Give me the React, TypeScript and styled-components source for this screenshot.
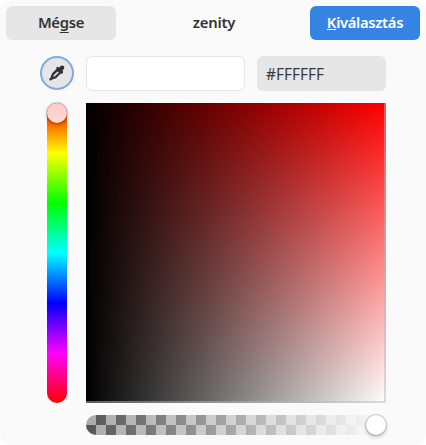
import React from "react";
import styled, { createGlobalStyle } from "styled-components";

const Global = createGlobalStyle`
  body { margin: 0; background: #fff; overflow: hidden; }
  * { box-sizing: border-box; }
`;

const Window = styled.main`
  width: 426px;
  height: 445px;
  border-radius: 14px;
  background: #fafafa;
  color: #2e3436;
  font: 15px "Noto Sans", sans-serif;
  overflow: hidden;
  position: relative;
`;

const CornerOutline = styled.svg`
  position: absolute;
  inset: 0;
  pointer-events: none;
`;

const HeaderBar = styled.header`
  display: grid;
  grid-template-columns: 110px 1fr 110px;
  height: 46px;
  padding: 6px;
  align-items: center;
`;

const Title = styled.h1`
  margin: 0;
  padding-left: 2px;
  font-size: 14.8px;
  letter-spacing: -0.2px;
  line-height: 33px;
  height: 34px;
  font-weight: 600;
  color: #333;
  text-align: center;
`;

const Button = styled.button<{ $primary?: boolean }>`
  height: 34px;
  padding: 0 0 1px;
  border: 0;
  border-radius: 6px;
  font: 600 14.8px/33px "Noto Sans", sans-serif;
  letter-spacing: ${(p) => (p.$primary ? "-0.32px" : "-0.3px")};
  color: ${(p) => (p.$primary ? "#fff" : "#333")};
  background: ${(p) => (p.$primary ? "#3584e4" : "#e6e6e6")};
`;

const Mnemonic = styled.span<{ $drop: number }>`
  text-decoration: underline;
  text-decoration-thickness: 1px;
  text-decoration-skip-ink: none;
  text-underline-offset: ${(p) => p.$drop}px;
`;

const Editor = styled.section`
  display: grid;
  grid-template-columns: 34px 300px;
  grid-template-rows: 35px 300px 20px;
  column-gap: 12px;
  row-gap: 12px;
  padding: 10px 40px 0;
`;

const PickerButton = styled.button`
  width: 34px;
  height: 34px;
  padding: 0;
  border: 2px solid #81aae0;
  border-radius: 50%;
  background: #e6e6e6;
  display: grid;
  place-items: center;
`;

const Fields = styled.div`
  display: grid;
  grid-template-columns: 159px 129px;
  gap: 12px;
`;

const Swatch = styled.div`
  border: 1px solid #e6e6e6;
  border-radius: 6px;
  background: #fff;
`;

const HexInput = styled.input`
  width: 129px;
  height: 35px;
  border: 0;
  border-radius: 6px;
  padding: 1px 9px 0;
  outline: 0;
  background: #e6e6e6;
  color: #3a3a3a;
  font: 15.4px "Noto Sans", sans-serif;
`;

const HueTrack = styled.div`
  width: 20px;
  height: 300px;
  justify-self: center;
  border-radius: 10px;
  position: relative;
  background: linear-gradient(#f00, #ff0 16.67%, #0f0 33.33%, #0ff 50%, #00f 66.67%, #f0f 83.33%, #f00);
`;

const Plane = styled.div`
  border: solid rgba(184, 184, 184, 0.5);
  border-width: 0 2px 2px 0;
  background: linear-gradient(to right, #000, transparent) border-box, linear-gradient(#f00, #fff) border-box;
`;

const AlphaTrack = styled.div`
  grid-column: 2;
  position: relative;
  height: 20px;
  border-radius: 10px;
  background:
    linear-gradient(to right, rgba(250, 250, 250, 0), #fafafa 97%),
    repeating-conic-gradient(#555 0 25%, #aaa 0 50%) 0 0 / 20px 20px;
`;

const Knob = styled.span<{ $hue?: boolean }>`
  position: absolute;
  top: 0;
  right: 0;
  width: 20px;
  height: 20px;
  border-radius: 50%;
  background: ${(p) => (p.$hue ? "linear-gradient(#ffc9c9, #fcd9d0)" : "#fff")};
  box-shadow: 0 0 0 1px rgba(0, 0, 0, 0.16), 0 2px 4px rgba(0, 0, 0, 0.24);
`;

export default function App() {
  return (
    <>
      <Global />
      <Window>
        <HeaderBar>
          <Button>Mé<Mnemonic $drop={4}>g</Mnemonic>se</Button>
          <Title>zenity</Title>
          <Button $primary><Mnemonic $drop={1}>K</Mnemonic>iválasztás</Button>
        </HeaderBar>
        <Editor>
          <PickerButton aria-label="Pick a color">
            <svg width="16" height="16" viewBox="0 0 16 16">
              <path
                fill="#2e3436"
                fillRule="evenodd"
                d="M7.5 2.2 9 1.8l1.1.9 1.2-1.4c1.1-1 2.6-1 3.4-.2s.8 2.3-.2 3.3l-1.2 1.3.8.8-.1 1.5-1.2 1-1-.6-4.7 4.8-3.9 1.2L2.1 15.500H1L.4 14.9v-1.3l1.2-1.1 1.3-4 4.8-4.7-.6-.7zM8.600 6.500 5 9.800l-.8 2.300 2-1 3.600-3.500z"
              />
            </svg>
          </PickerButton>
          <Fields>
            <Swatch />
            <HexInput defaultValue="#FFFFFF" />
          </Fields>
          <HueTrack><Knob $hue /></HueTrack>
          <Plane />
          <AlphaTrack><Knob /></AlphaTrack>
        </Editor>
        <CornerOutline width="426" height="445" fill="none" stroke="#c4c4c4" strokeWidth="0.8" strokeDasharray="1.2 1.4">
          <path d="M.5 9A14 14 0 0 1 9 .5M417 .5A14 14 0 0 1 425.500 9M.5 436A14 14 0 0 0 9 444.500M417 444.500A14 14 0 0 0 425.500 436" />
        </CornerOutline>
      </Window>
    </>
  );
}
